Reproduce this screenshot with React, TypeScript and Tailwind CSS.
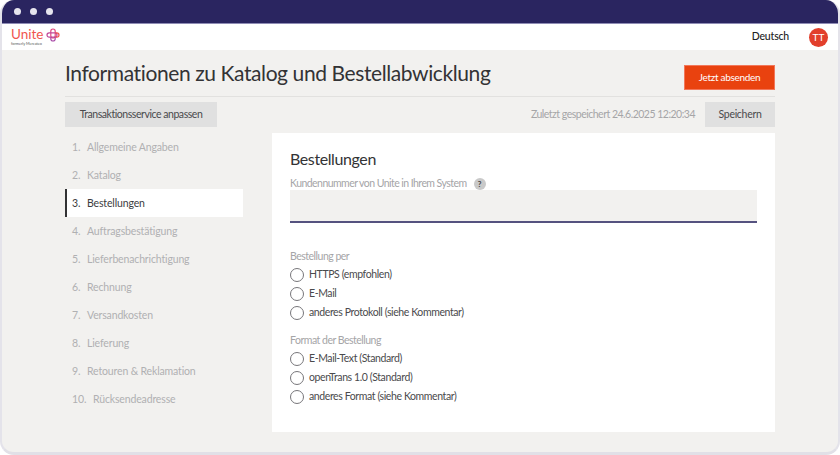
const nav = [
  "Allgemeine Angaben",
  "Katalog",
  "Bestellungen",
  "Auftragsbestätigung",
  "Lieferbenachrichtigung",
  "Rechnung",
  "Versandkosten",
  "Lieferung",
  "Retouren & Reklamation",
  "Rücksendeadresse",
];

function Radio({ label }: { label: string }) {
  return (
    <div className="flex items-center h-[19px] gap-[5px]">
      <span className="w-[14px] h-[14px] rounded-full border border-[#77767a] bg-white shrink-0" />
      <span className="text-[10.5px] tracking-[-0.4px] text-[#4a4a4c] pt-px">{label}</span>
    </div>
  );
}

export default function App() {
  return (
    <div className="w-[840px] h-[455px] bg-white overflow-hidden font-['Lato',sans-serif]">
      <div className="w-full h-full rounded-[14px] overflow-hidden border-x-2 border-b-[3px] border-x-[#e4e3ea] border-b-[#e1e0e7] bg-[#f2f1ef] flex flex-col">
        <div className="h-[24px] -mx-[2px] bg-[#2a2560] border-b border-[#8f8cb5] flex items-center gap-[9px] pl-[14px] shrink-0">
          <span className="w-[7px] h-[7px] rounded-full bg-[#e6e5ee]" />
          <span className="w-[7px] h-[7px] rounded-full bg-[#e6e5ee]" />
          <span className="w-[7px] h-[7px] rounded-full bg-[#e6e5ee]" />
        </div>
        <div className="h-[26px] bg-white flex items-center justify-between pl-[9px] pr-[10px] shrink-0">
          <div className="flex flex-col">
            <div className="flex items-center gap-[3px] h-[14px]">
              <span className="text-[13.5px] leading-none text-[#f0544f]">Unite</span>
              <svg width="14" height="14" viewBox="0 0 14 14" fill="none" strokeWidth="1.2">
                <path d="M7 1a2.2 2.2 0 0 1 2.2 2.2v4.6a2.2 2.2 0 0 1-4.4 0V3.2A2.2 2.2 0 0 1 7 1z" stroke="#e0497f" />
                <path d="M3.2 4.8h5.6a2.2 2.2 0 0 1 0 4.4H3.2a2.2 2.2 0 0 1 0-4.4z" stroke="#c0479a" />
                <path d="M9.2 4.8h1.6a2.2 2.2 0 0 1 0 4.4H9.2" stroke="#f0544f" />
                <path d="M4.8 9.2v1.6a2.2 2.2 0 0 0 4.4 0V9.2" stroke="#a94ba8" />
              </svg>
            </div>
            <span className="text-[3.8px] leading-[4px] text-[#555]">formerly Mercateo</span>
          </div>
          <div className="flex items-center gap-[20px]">
            <span className="text-[10.5px] tracking-[-0.2px] font-medium text-[#222]">Deutsch</span>
            <span className="w-[19px] h-[19px] rounded-full bg-[#e23f2c] text-white text-[10px] flex items-center justify-center">TT</span>
          </div>
        </div>
        <div className="flex-1 px-[63px] flex flex-col">
          <div className="h-[47px] border-b border-[#e2e1df] flex items-center justify-between shrink-0">
            <h1 className="text-[21px] tracking-[-0.4px] leading-none text-[#333335] font-normal mb-[2px]">Informationen zu Katalog und Bestellabwicklung</h1>
            <button className="w-[91px] h-[25px] bg-[#e9420f] border border-[#f2775a] text-white text-[10px] tracking-[-0.3px] mt-[9px]">Jetzt absenden</button>
          </div>
          <div className="flex items-center justify-between h-[25px] mt-[5px] shrink-0">
            <button className="w-[152px] h-[25px] pt-px bg-[#e0e0e0] text-[10.5px] tracking-[-0.45px] text-[#4a4a4c]">Transaktionsservice anpassen</button>
            <div className="flex items-center gap-[10px]">
              <span className="text-[10.5px] tracking-[-0.5px] text-[#a5a5a7] pt-px">Zuletzt gespeichert 24.6.2025 12:20:34</span>
              <button className="w-[70px] h-[25px] pt-px bg-[#e0e0e0] text-[10.5px] tracking-[-0.3px] text-[#4a4a4c]">Speichern</button>
            </div>
          </div>
          <div className="flex mt-[6px]">
            <div className="w-[178px] flex flex-col shrink-0">
              {nav.map((n, i) => {
                const active = i === 2;
                return (
                  <div
                    key={n}
                    className={
                      active
                        ? "h-[28px] pt-px flex items-center bg-white border-l-2 border-[#333335] pl-[5px] text-[10.5px] tracking-[-0.15px] text-[#3c3c3e]"
                        : "h-[28px] pt-px flex items-center pl-[7px] text-[10.5px] tracking-[-0.15px] text-[#b0b0b2]"
                    }
                  >
                    <span className={i === 9 ? "w-[20px]" : "w-[15px]"}>{i + 1}.</span>
                    <span className={i === 9 ? "ml-[1px]" : ""}>{n}</span>
                  </div>
                );
              })}
            </div>
            <div className="ml-[29px] w-[503px] h-[299px] bg-white px-[18px] pt-[16px]">
              <h2 className="text-[16px] tracking-[-0.4px] leading-[20px] font-normal text-[#333335]">Bestellungen</h2>
              <div className="flex items-center gap-[7px] mt-[9px] h-[12px]">
                <span className="text-[10.5px] tracking-[-0.55px] text-[#a5a5a7]">Kundennummer von Unite in Ihrem System</span>
                <span className="w-[12px] h-[12px] rounded-full bg-[#c9c9c9] text-[8px] font-bold text-[#444] flex items-center justify-center">?</span>
              </div>
              <div className="h-[33px] bg-[#f2f1ef] border-b-2 border-[#55527f]" />
              <div className="text-[10.5px] tracking-[-0.5px] leading-[14px] text-[#a5a5a7] mt-[26px]">Bestellung per</div>
              <div className="flex flex-col mt-[2px]">
                <Radio label="HTTPS (empfohlen)" />
                <Radio label="E-Mail" />
                <Radio label="anderes Protokoll (siehe Kommentar)" />
              </div>
              <div className="text-[10.5px] tracking-[-0.5px] leading-[14px] text-[#a5a5a7] mt-[11px]">Format der Bestellung</div>
              <div className="flex flex-col mt-[2px]">
                <Radio label="E-Mail-Text (Standard)" />
                <Radio label="openTrans 1.0 (Standard)" />
                <Radio label="anderes Format (siehe Kommentar)" />
              </div>
            </div>
          </div>
        </div>
      </div>
    </div>
  );
}
